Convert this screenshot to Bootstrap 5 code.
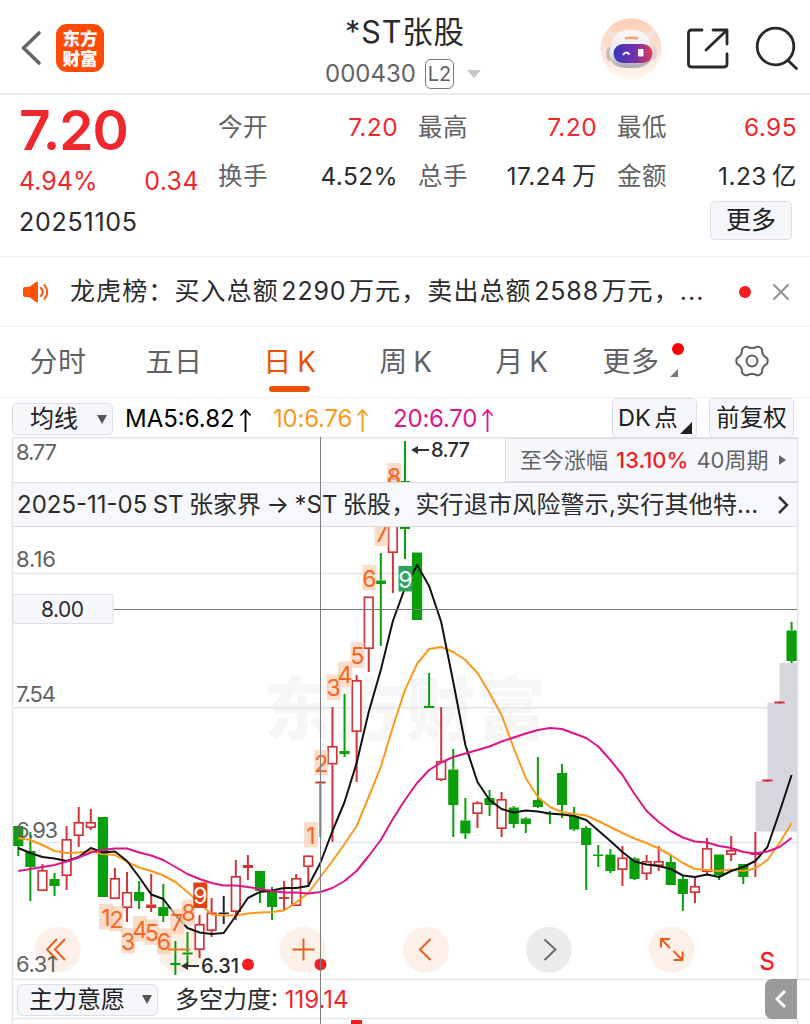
<!DOCTYPE html>
<html lang="zh-CN">
<head>
<meta charset="utf-8">
<meta name="viewport" content="width=device-width, initial-scale=1">
<title>*ST张股 000430</title>
<link href="https://cdn.jsdelivr.net/npm/bootstrap@5.3.0/dist/css/bootstrap.min.css" rel="stylesheet">
<style>
body{font-family:Inter,"Noto Sans CJK SC",sans-serif;color:#2b2b2d;background:#fff;width:810px;height:1024px;overflow:hidden;line-height:1}
.up{color:#f0282d}
.dim{color:#626264}
.app-head{height:95px;border-bottom:2px solid #ececee}
.app-logo{width:48px;height:48px;border-radius:11px;background:#ff4a08;color:#fff;font:900 17.5px/20px "Noto Sans CJK SC",sans-serif;padding-top:4px;margin-left:14px}
.stock-name{font-size:30.5px;line-height:36px;letter-spacing:.9px}
.stock-code{font-size:24px;line-height:30px}
.lv{border:1.5px solid #777;border-radius:6px;width:29px;height:30px;font-size:20px;line-height:28px;margin-left:9px}
.caret{width:0;border:7px solid transparent;border-top:8px solid #c6c6c8;border-bottom:0;margin-left:13px}
.quote{height:162px;border-bottom:1px solid #eeeef0}
.price{font-size:55px;font-weight:600;line-height:60px;letter-spacing:-1px}
.q24{font-size:25px;line-height:30px}
.stats{display:grid;grid-template-columns:180px 179px 180px;column-gap:20px;font-size:24.5px;line-height:48.5px;letter-spacing:.4px}
.soft-btn{background:#f6f7fb;border:1.5px solid #dddfe4;border-radius:5px;padding:0;color:#202022;line-height:1}
.notice{height:70px;border-bottom:1px solid #eeeef0;font-size:25px}
.notice-text{letter-spacing:1.1px;width:637px;white-space:nowrap}
.notice-text b{font-weight:400;margin:0 2.5px;letter-spacing:.85px}
.dot{width:12px;height:12px;border-radius:50%;background:#f31c22}
.period-tabs{height:71px;border-bottom:1px solid #eeeef0;font-size:28px;letter-spacing:.6px;word-spacing:-3px}
.period-tabs>div{width:116px;flex:none;text-align:center;line-height:71px;position:relative}
.period-tabs .on{color:#ea5205}
.on::after{content:"";position:absolute;left:37px;bottom:5px;width:41px;height:6px;border-radius:3px;background:#ea5205}
.tools{height:39px;font-size:24px}
.tools .ma{white-space:nowrap;line-height:41px}
.rise-arrow{margin-left:4px}
.tri{width:0;border:5px solid transparent;border-top:9px solid #555;border-bottom:0}
.corner{position:absolute;width:0;border-left:12px solid transparent;border-bottom:12px solid #202022}
.plot{height:587px}
.plot svg.k{display:block}
.rise{top:1px;left:505px;width:292px;height:44px;background:#f6f7fb;border:1px solid #d9dae0;border-right:0;font-size:22px}
.event{top:45px;left:13px;width:784px;height:45px;background:#f7f8fb;border:1px solid #d9dae0;border-width:1.5px 0;font-size:24px;white-space:nowrap;word-spacing:-1.4px}
.foot{top:543px;left:17px;height:39px;font-size:24px}
.fold{top:542px;left:765px;width:32px;height:40px;background:#9a9a9a;border-radius:7px 0 0 7px}
</style>
</head>
<body>
<header class="app-head d-flex position-relative align-items-center">
  <svg width="22" height="38" viewBox="0 0 22 38" style="margin:4px 0 0 20px"><path d="M19 3 3.500 18 19 33" fill="none" stroke="#666" stroke-width="3.600" stroke-linecap="round" stroke-linejoin="round"/></svg>
  <div class="app-logo text-center" style="margin-top:2px">东方<br>财富</div>
  <div class="position-absolute start-50 translate-middle-x text-center pt-1" style="top:10px">
    <div class="stock-name">*ST张股</div>
  </div>
  <div class="position-absolute d-flex align-items-center stock-code dim" style="left:325px;top:59px"><span>000430</span><span class="lv text-center">L2</span><span class="caret"></span></div>
  <div class="ms-auto d-flex align-items-center pt-1">
    <svg width="62" height="62" viewBox="0 0 62 62">
      <defs><linearGradient id="halo" x2="0" y2="1"><stop stop-color="#ffcdb5"/><stop offset="1" stop-color="#fff6f1"/></linearGradient>
      <linearGradient id="visor"><stop stop-color="#3538bb"/><stop offset=".55" stop-color="#7430a8"/><stop offset="1" stop-color="#e43b56"/></linearGradient>
      <linearGradient id="shell" x2="0" y2="1"><stop stop-color="#fdf8f7"/><stop offset=".6" stop-color="#eee9ea"/><stop offset="1" stop-color="#aaa4ac"/></linearGradient></defs>
      <circle cx="31" cy="31" r="30.500" fill="url(#halo)"/>
      <path d="M14 20Q8 17 8 11q1 5 9 6zM45 17q7-1 8-6 1 6-5 10z" fill="#f0e4e2" stroke="#f0e4e2" stroke-width="2"/>
      <ellipse cx="9.500" cy="36" rx="3.500" ry="7" fill="#c8bec2"/><ellipse cx="54" cy="35" rx="3" ry="7" fill="#ddd3d5"/>
      <path d="M12 26Q13 12 31 12t19 15q4 6 2 13-3 10-21 10t-20-8q-3-8 1-16z" fill="url(#shell)"/>
      <rect x="13.500" y="26" width="39" height="19" rx="9.500" fill="url(#visor)"/>
      <path d="M25 20.500q6-1.500 13 0" stroke="#f2a36f" stroke-width="2.500" fill="none"/>
      <path d="M23 37q3-4.500 6.500-.5" stroke="#fff" stroke-width="2" fill="none"/><rect x="38" y="31" width="5.500" height="7.500" rx="1" fill="#fff"/>
    </svg>
    <svg width="44" height="44" viewBox="0 0 44 44" style="margin-left:24px" fill="none" stroke="#29292b" stroke-width="2.800" stroke-linecap="round" stroke-linejoin="round"><path d="M16 3H5.500q-3 0-3 3v31q0 3 3 3H38q3 0 3-3V27M20 23 40 4M27 3H41V17"/></svg>
    <svg width="46" height="46" viewBox="0 0 46 46" style="margin:0 10px 0 24px;overflow:visible" fill="none" stroke="#29292b" stroke-width="2.800" stroke-linecap="round"><g transform="translate(-.5 0)"><circle cx="22" cy="20.500" r="18.300"/><path d="m34.500 34.500 8.500 8"/></g></svg>
  </div>
</header>

<section class="quote d-flex">
  <div style="width:180px;margin-left:19px;padding-top:5px">
    <div class="price up">7.20</div>
    <div class="q24 up d-flex justify-content-between" style="margin-top:6px"><span>4.94%</span><span style="letter-spacing:.4px">0.34</span></div>
    <div class="q24" style="margin-top:11px;letter-spacing:.75px">20251105</div>
  </div>
  <div style="margin-left:19px;padding-top:8px">
    <div class="stats">
      <div class="d-flex justify-content-between"><span class="dim">今开</span><span class="up">7.20</span></div>
      <div class="d-flex justify-content-between"><span class="dim">最高</span><span class="up">7.20</span></div>
      <div class="d-flex justify-content-between"><span class="dim">最低</span><span class="up">6.95</span></div>
      <div class="d-flex justify-content-between"><span class="dim">换手</span><span>4.52%</span></div>
      <div class="d-flex justify-content-between"><span class="dim">总手</span><span style="word-spacing:-2px">17.24 万</span></div>
      <div class="d-flex justify-content-between"><span class="dim">金额</span><span style="word-spacing:-2px">1.23 亿</span></div>
    </div>
    <div class="text-end" style="padding:1px 5px 0 0"><button class="btn soft-btn" style="width:82px;height:39px;font-size:25px">更多</button></div>
  </div>
</section>

<section class="notice d-flex align-items-center">
  <svg width="27" height="22" viewBox="0 0 27 22" style="margin-left:22px"><path d="M1 8q0-2 2-2h4L14 1q2-1 2 1v18q0 2-2 1L7 16H3q-2 0-2-2z" fill="#ff5207"/><path d="M19 7q3.500 4 0 8M22.500 4q5.500 7 0 14" fill="none" stroke="#ff5207" stroke-width="2" stroke-linecap="round"/></svg>
  <div class="notice-text" style="margin-left:21px">龙虎榜：买入总额<b>2290</b>万元，卖出总额<b>2588</b>万元，...</div>
  <span class="dot" style="margin-left:32px"></span>
  <svg width="18" height="18" viewBox="0 0 18 18" style="margin-left:21px"><path d="m2 2 14 14M16 2 2 16" stroke="#929294" stroke-width="2" stroke-linecap="round"/></svg>
</section>

<nav class="period-tabs d-flex dim">
  <div>分时</div><div>五日</div><div class="on">日 K</div><div>周 K</div><div>月 K</div>
  <div style="left:-7px">更多<span class="dot position-absolute" style="left:99px;top:16px;background:#f00"></span><span class="corner" style="left:97px;top:42px;border-left-width:8px;border-bottom:8px solid #777"></span></div>
  <div style="left:-2px"><svg width="36" height="36" viewBox="-18 -17 36 36" fill="none" stroke="#5f5f61" stroke-width="2" stroke-linejoin="round" style="vertical-align:middle;margin-top:-4px"><circle r="5.500"/><path id="gear"/></svg></div>
</nav>

<section class="tools d-flex">
  <button class="btn soft-btn d-flex align-items-center" style="width:101px;height:32px;margin:5px 0 0 12px;padding-left:17px;font-size:24px">均线<span class="tri" style="margin-left:19px"></span></button>
  <span class="ma text-black" style="margin-left:12px;width:148px">MA5:6.82<svg class="rise-arrow" width="13" height="24" viewBox="0 0 13 24" fill="none" stroke="currentColor" stroke-width="1.800"><path d="M6.500 24V2M1.500 7.500l5-5.500 5 5.500"/></svg></span>
  <span class="ma" style="color:#fb991e;width:120px;letter-spacing:-.2px">10:6.76<svg class="rise-arrow" width="13" height="24" viewBox="0 0 13 24" fill="none" stroke="currentColor" stroke-width="1.800"><path d="M6.500 24V2M1.500 7.500l5-5.500 5 5.500"/></svg></span>
  <span class="ma" style="color:#e01689;width:219px;letter-spacing:-.2px">20:6.70<svg class="rise-arrow" width="13" height="24" viewBox="0 0 13 24" fill="none" stroke="currentColor" stroke-width="1.800"><path d="M6.500 24V2M1.500 7.500l5-5.500 5 5.500"/></svg></span>
  <button class="btn soft-btn position-relative text-start" style="width:85px;height:40px;padding-left:5px;font-size:23.500px;word-spacing:-3px">DK 点<span class="corner" style="right:4px;bottom:3px"></span></button>
  <button class="btn soft-btn" style="width:85px;height:40px;margin-left:12px;font-size:23.500px">前复权</button>
</section>

<main class="plot position-relative">
  <svg class="k" width="810" height="587" viewBox="0 437 810 587">
    <text x="264" y="735" font-size="69" font-weight="900" fill="#f6f6f7" font-family="Noto Sans CJK SC" textLength="282">东方财富</text>
    <g stroke="#e3e4e9" stroke-width="1.500" fill="none"><path d="M12.500 1024V437.700H797.500V979M13 573.500H797M13 707.700H797M13 842.500H797M13 979.500H810M13 1018.500H797M797.500 1018V1024" /></g>
    <path d="M755.500 831.500V781H767.500V702.500H779.500V663H797V831.500Z" fill="#d5d6de"/>
    <g fill="#fdf0e8"><circle cx="57.700" cy="949.700" r="23"/><circle cx="180.300" cy="949.700" r="23"/><circle cx="303" cy="949.700" r="23"/><circle cx="426.200" cy="949.700" r="23"/><circle cx="671.700" cy="949.700" r="23"/><circle cx="549" cy="949.700" r="23" fill="#ebebeb"/></g>
    <g fill="none" stroke="#ee5a15" stroke-width="1.900"><path d="m57 939-10 10.500 10 10.500M65 939 55 949.500 65 960M292.500 949.500h22M303.500 938.500v22M430.500 939l-10.500 10.500 10.500 10.500"/><path d="M661 947.500v-8.500h9M661 939l9 9M682.500 951.500v8.500h-9M682.500 960l-9-9"/><path d="m544.500 939.500 11 10-11 10.500" stroke="#666"/></g>
    <g id="candles"></g>
    <g font-size="22" fill="#626264"><text x="16" y="460" textLength="41">8.77</text><text x="16" y="567" textLength="40">8.16</text><text x="16" y="702" textLength="40">7.54</text><text x="16" y="837.500" textLength="42">6.93</text><text x="16" y="972" textLength="40">6.31</text></g>
    <g id="lines" fill="none" stroke-width="2" stroke-linejoin="round"></g>
    <g id="marks" font-size="23" text-anchor="middle"></g>
    <path d="M168 949.500h22" stroke="#ee7a20" stroke-width="2"/>
    <g stroke="#333" stroke-width="1.800"><path d="M414 450h15M185 966h14"/></g><path d="m411 450 7-4v8zM181 966l7-4v8z" fill="#333"/>
    <g font-size="20" font-weight="500" fill="#2b2b2d"><text x="431" y="457" textLength="39">8.77</text><text x="201" y="973" textLength="38">6.31</text></g>
    <path d="M13 609.500H797" stroke="#777"/>
    <rect x="13" y="594.500" width="100" height="29" rx="2" fill="#f6f7fb" stroke="#dddfe4"/><text x="41" y="617" font-size="21" textLength="43" fill="#2b2b2d">8.00</text>
    <circle cx="248" cy="964.500" r="6" fill="#f31c22"/><circle cx="320.500" cy="964.500" r="6" fill="#f31c22"/>
    <text x="759.500" y="970" font-size="24" fill="#f31c22" stroke="#f31c22" stroke-width=".4">S</text>
    <rect x="351" y="1020" width="11" height="4" fill="#f31c22"/>
  </svg>
  <div class="rise position-absolute d-flex align-items-center dim" style="padding-left:14px"><span>至今涨幅</span><span style="color:#f31c22;font-weight:500;margin:0 8px 0 8px">13.10%</span><span>40周期</span><span style="margin-left:11px;border:5px solid transparent;border-left:7px solid #666;border-right:0"></span></div>
  <div class="event position-absolute d-flex align-items-center" style="padding-left:4px"><div>2025-11-05 ST 张家界 → *ST <span style="letter-spacing:.2px">张股，实行退市风险警示,实行其他特...</span></div><svg class="position-absolute" style="right:7px" width="13" height="20" viewBox="0 0 13 20"><path d="m2 2 8 8-8 8" fill="none" stroke="#333" stroke-width="2.500"/></svg></div>
  <div class="foot position-absolute d-flex align-items-center"><button class="btn soft-btn d-flex align-items-center" style="width:141px;height:32px;padding-left:11px;font-size:24px">主力意愿<span class="tri" style="margin-left:17px"></span></button><span style="margin-left:17px;white-space:nowrap">多空力度: <span class="up">119.14</span></span></div>
  <div class="fold position-absolute d-flex align-items-center justify-content-center"><svg width="12" height="20" viewBox="0 0 12 20"><path d="m10 2-8 8 8 8" fill="none" stroke="#fff" stroke-width="3"/></svg></div>
  <svg class="position-absolute" style="left:320px;top:0" width="1" height="587"><path d="M.5 0V587" stroke="#808080"/></svg>
</main>
<script src="https://cdn.jsdelivr.net/npm/bootstrap@5.3.0/dist/js/bootstrap.bundle.min.js"></script>
<script>
// colour, high, body top, body bottom, low; lower case r is hollow, R is filled
const rows = `g 826 826 846 856|g 832 851 867 901|r 864 870 891 891|g 873 879 886 896|r 826 839 876 890|r 807 822 836 847|r 809 822 828 830|g 817 817 897 897|r 868 878 899 899|r 872 892 908 922|g 881 892 901 909|R 874 904.5 908 912|g 884 907 916 922|g 941 963 965 975|g 932 952.5 954.5 965|r 915 924 950 958|r 898 912.5 931 937|k 896 912.5 914 924|r 860 876 912 920|R 855 865 868 880|g 871 871 891 903|g 887 891 907 920|R 881 897 899 910|r 874 878 906 906|r 855 855.5 867 887|R 782 781.500 783.500 837|r 707 746 764.5 842|g 694 751 754 757|r 675 680 732 782|r 596.5 596.5 649 672|g 553 580.500 584 646|r 470 478 553 593|g 441 481 529 559|g 552.5 552.5 620 620|g 673 706 708 708|r 707 761 780 781|g 749 769.5 805 837|g 798 820.500 833.500 839|r 801 802.5 814 828|g 790 798 805 816|r 792 799 829 837|g 806 807.5 824 828|g 817 818.5 824 833|g 757 800 807 808|g 811 813 814.5 824|g 764 773 805 818|g 807 816 829.5 831|g 826 828 845 890|g 845 854.5 856 867|g 849 854.5 871 873|r 846 857.5 870 886|g 857 858.5 879 880|r 855 861 874 880|r 846 861 866 871|g 855 862 885 885|g 876 879 894 911|r 876 886 893 903|r 838 848 872 876|g 854.5 854.5 875 880|r 836 850 855 861|g 864 864 877 884|R 832 853.500 855 877|R 780 779.500 781.500 781|R 702 701.500 703.500 703|g 622 630.500 661 663`.split('|');
const hue = {g:'#0a9f0a', r:'#cf3438', R:'#cf3438', k:'#222'};
const cx = i => 18.3 + i * 12.083;
document.getElementById('candles').innerHTML = rows.map((row, i) => {
  const [c, ...v] = row.split(' '), [h, t, b, l] = v.map(Number), x = cx(i), hollow = c === 'r';
  return `<path d="M${x} ${h}V${t}M${x} ${b}V${l}" stroke="${hue[c]}" stroke-width="2"/>` +
    (hollow ? `<rect x="${x-4.3}" y="${t+.8}" width="8.600" height="${b-t-1.6}" fill="#fff" stroke="${hue[c]}" stroke-width="1.700"/>`
            : `<rect x="${x-5.1}" y="${t}" width="10.200" height="${b-t}" fill="${hue[c]}"/>`);
}).join('');
const averages = {
 '#fb991e':'838 840 845 851 853 852.5 851 854 855 862 867.5 871 875.5 882 892 903 914.5 915.5 915.5 913.5 912.5 912 910.5 902.5 893 877 861 844 826 797 767 727 690 664 649 647 652 660 673 693 715 748 778 797 807 812 814 815.5 821 827 833 838.5 843 848.5 855 863 869 870 871 869.5 871 868.5 860 843 823',
 '#111':'848 853 857 858.5 861 857 848 852.5 851.5 861 877 894.5 899 915 928 932.5 934 933 916 898 892 890.5 888 888 886 863 831 802 763 712 670 621 588 565 586 622 682 745 782 800 809 812.5 810.5 811.5 813.5 814.5 816 820 830.5 841 852 861.5 864.5 866 869 875.5 877 874.5 877 871 867 861 847 812 775',
 '#dc1589':'871 869 867 865 861.5 857.5 852.5 850 848.5 848.5 852.5 855.5 860 867 874 879 883 885.5 885.5 887 889 891 892.5 892.5 893.5 892 888 881 871 856 840 819 800 783 770 762.5 757 753.5 750 746.5 741.5 737.5 733.5 730 728 729 733.5 738 746.5 760 775 794 811 822 831 837.5 841.5 842.5 846 848 852 853.5 851.5 847 838'};
document.getElementById('lines').innerHTML = Object.entries(averages).map(([c, s]) =>
  `<polyline stroke="${c}" points="${s.split(' ').map((y, i) => cx(i) + ',' + y).join(' ')}"/>`).join('');
// sequential count labels: text, centre x, box top, fill
const marks = [[1,106,904],[2,116.5,906],[3,128,928],[4,140,916],[5,152,919.5],[6,164,928.5],[7,177,909],[8,188.5,899.5],[9,200.3,882.5,'#e2420f'],[1,311,822],[2,321.3,750],[3,333.5,674.5],[4,345,661.5],[5,357.5,642.500],[6,369.5,565],[7,381.5,520.5],[8,394,463],[9,405.500,566,'#2fa45c']];
document.getElementById('marks').innerHTML = marks.map(([n, x, y, c]) =>
  `<rect x="${x-7}" y="${y}" width="14" height="25.500" fill="${c || '#fbc9ad'}" fill-opacity="${c ? 1 : .65}"/><text x="${x}" y="${y+21.5}" fill="${c ? '#fff' : '#f4661f'}">${n}</text>`).join('');
// settings cog outline with six soft lobes
let d = '';
for (let a = 0; a <= 360; a += 4) {
  const r = 14.3 + 1.5 * Math.tanh(1.6 * Math.cos(6 * a * Math.PI / 180));
  d += (a ? 'L' : 'M') + (r * Math.cos(a * Math.PI / 180)).toFixed(2) + ' ' + (r * Math.sin(a * Math.PI / 180)).toFixed(2);
}
document.getElementById('gear').setAttribute('d', d + 'Z');
</script>
</body>
</html>
